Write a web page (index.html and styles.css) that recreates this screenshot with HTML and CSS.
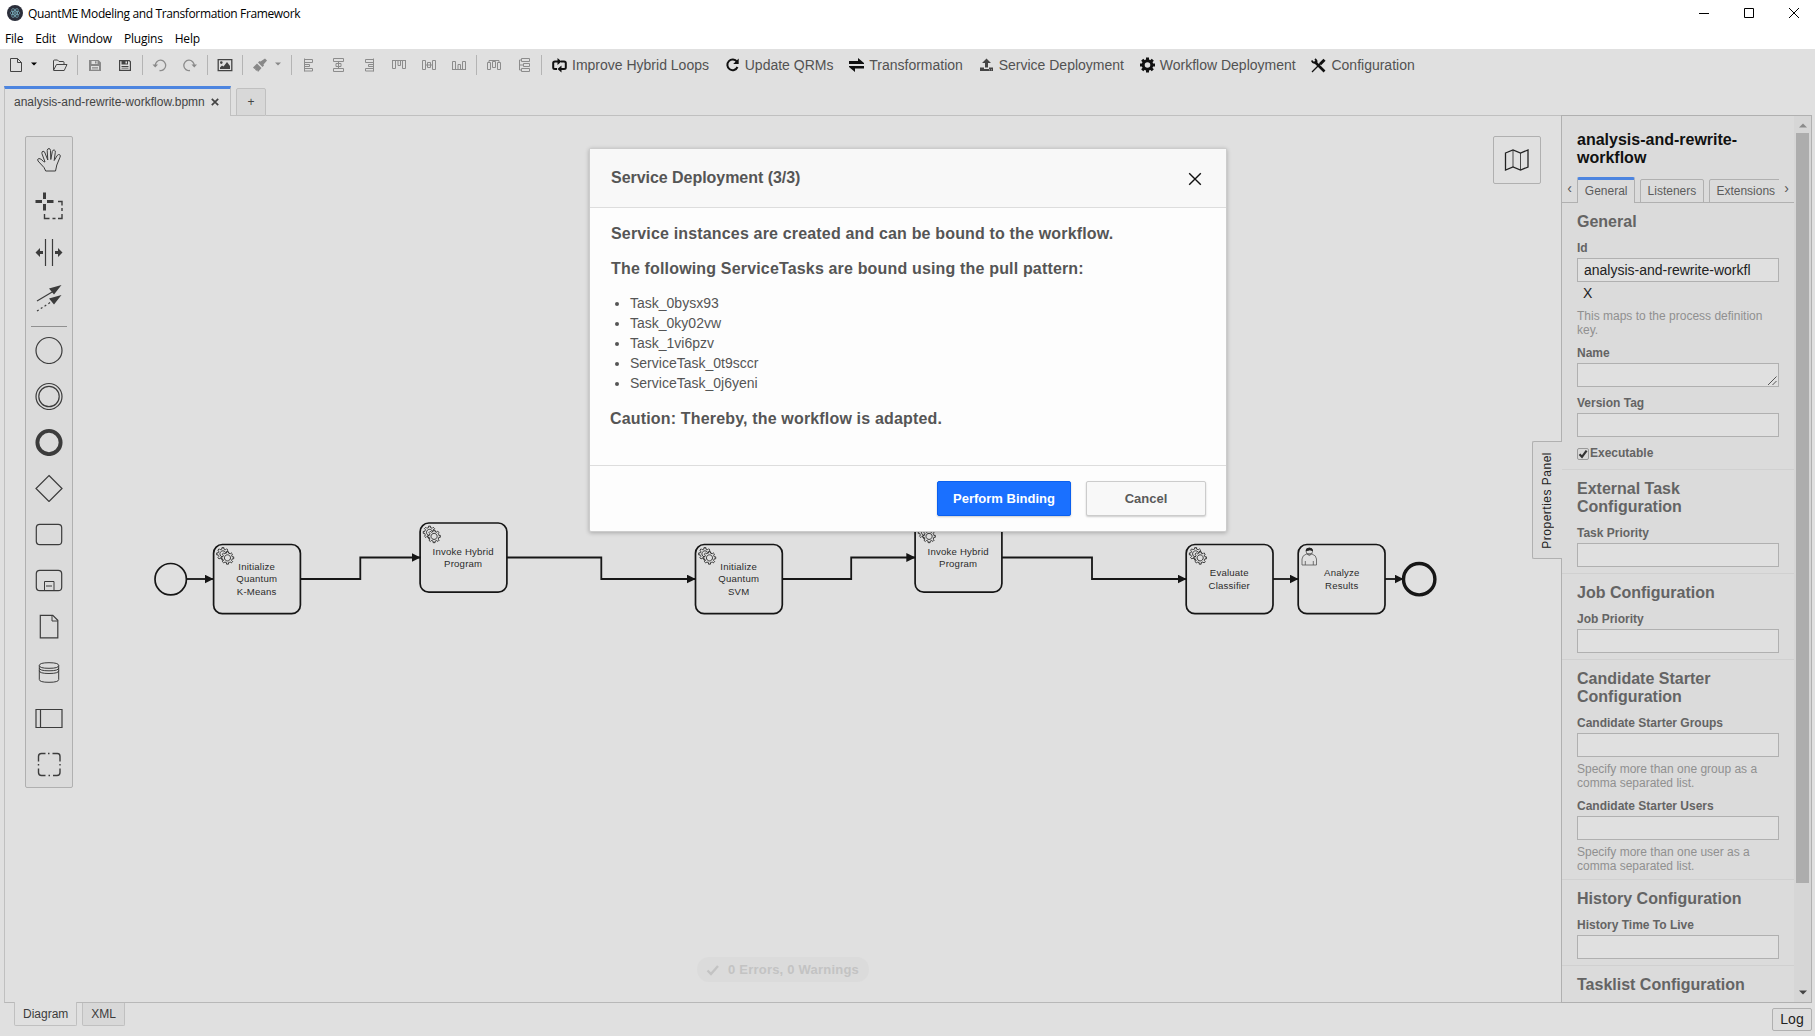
FILE: index.html
```html
<!DOCTYPE html>
<html lang="en">
<head>
<meta charset="utf-8">
<title>QuantME Modeling and Transformation Framework</title>
<link rel="stylesheet" href="styles.css">
</head>
<body>
<div class="window">
  <header class="titlebar">
    <svg class="app-icon" width="16" height="16" viewBox="0 0 16 16"><circle cx="8" cy="8" r="8" fill="#2b2e3a"/><g fill="none" stroke="#9feaf9" stroke-width=".6" opacity=".8"><ellipse cx="8" cy="8" rx="5" ry="2"/><ellipse cx="8" cy="8" rx="5" ry="2" transform="rotate(60 8 8)"/><ellipse cx="8" cy="8" rx="5" ry="2" transform="rotate(120 8 8)"/></g><circle cx="8" cy="8" r=".8" fill="#9feaf9"/></svg>
    <span class="app-title">QuantME Modeling and Transformation Framework</span>
    <div class="window-controls">
      <svg width="12" height="12" viewBox="0 0 12 12"><path d="M1 6.500h10"/></svg>
      <svg width="12" height="12" viewBox="0 0 12 12"><path d="M1.500 1.500h9v9h-9z"/></svg>
      <svg width="12" height="12" viewBox="0 0 12 12"><path d="M1 1l10 10M11 1L1 11"/></svg>
    </div>
  </header>
  <nav class="menubar"><span>File</span><span>Edit</span><span>Window</span><span>Plugins</span><span>Help</span></nav>

  <div class="toolbar">
    <span class="tool"><svg width="16" height="16" viewBox="0 0 16 16"><path class="ln" d="M2.500 1.500h7l4 4v9h-11zM9.500 1.500v4h4"/></svg></span>
    <span class="caret"><svg width="6" height="4" viewBox="0 0 6 4"><path d="M0 .5h6L3 3.500z"/></svg></span>
    <span class="tool"><svg width="16" height="16" viewBox="0 0 16 16"><path class="ln" d="M1.500 13V4q0-1 1-1h3l1.500 1.500h4q1 0 1 1V7M1.500 13.300L4.500 7.500h10.500L12.200 13.500H1.500"/></svg></span>
    <i class="sep"></i>
    <span class="tool off"><svg width="16" height="16" viewBox="0 0 16 16"><path fill-rule="evenodd" d="M2 3h9.500L14 5.500V14H2zM4.500 4v3h6V4zM4 9v3.800h8V9z"/><path d="M8 4.300h1.500v2.200H8zM5 10h6v.8H5zM5 11.600h6v.7H5z"/></svg></span>
    <span class="tool"><svg width="16" height="16" viewBox="0 0 16 16"><path fill-rule="evenodd" d="M2 3h10.500L14 4.500V14H2zM3.200 4.200v8.600h9.600V5l-.8-.8z"/><path fill-rule="evenodd" d="M4.500 3.500h6.500v4H4.500zM8.500 4.300v2.200h1.500V4.300zM4.500 9h7v.9h-7zM4.500 10.700h7v.9h-7z"/></svg></span>
    <i class="sep"></i>
    <span class="tool off"><svg width="16" height="16" viewBox="0 0 16 16"><path class="ln w" d="M3.300 8.500a5.200 5.200 0 1 1 4.200 5"/><path d="M.5 7.500h5.500L3.200 10.500z"/></svg></span>
    <span class="tool off"><svg width="16" height="16" viewBox="0 0 16 16"><path class="ln w" d="M12.200 8.500a5.200 5.200 0 1 0-4.200 5"/><path d="M15 7.500H9.500l2.800 3z"/></svg></span>
    <i class="sep"></i>
    <span class="tool"><svg width="16" height="16" viewBox="0 0 16 16"><path class="ln w" d="M1.200 2.700h13.600v11H1.200z"/><circle cx="4.300" cy="5.600" r="1.300"/><path d="M3 12V10.500l2-2 1.500 1 3.500-4.500L13 9v3z"/></svg></span>
    <i class="sep"></i>
    <span class="tool off"><svg width="16" height="16" viewBox="0 0 16 16"><path d="M13 1.500l2 2-3.500 4 .5 1-1.500 1.500L6 5.500 7.500 4l1 .5zM5 6.500l4.500 4.500-3.500 4L5 13l-.5 1-1.500-1.500.5-1-1 .5L1 10.500z"/></svg></span>
    <span class="caret off"><svg width="6" height="4" viewBox="0 0 6 4"><path d="M0 .5h6L3 3.500z"/></svg></span>
    <i class="sep"></i>
    <span class="tool off"><svg width="16" height="16" viewBox="0 0 16 16"><path class="ln" d="M3.500 1.500v13M3.500 2.500h8v3h-8M3.500 7.500h5v2h-5M3.500 11.500h8v2.500h-8"/></svg></span>
    <span class="tool off"><svg width="16" height="16" viewBox="0 0 16 16"><path class="ln" d="M2.500 1.500h10v3h-10zM5 6.500h5v3H5zM2.500 11.500h10v3h-10zM7.500 4.500v7"/></svg></span>
    <span class="tool off"><svg width="16" height="16" viewBox="0 0 16 16"><path class="ln" d="M12.500 1.500v13M12.500 2.500h-8v3h8M12.500 7.500h-5v2h5M12.500 11.500h-8v2.500h8"/></svg></span>
    <span class="tool off"><svg width="16" height="16" viewBox="0 0 16 16"><path class="ln" d="M1 3.500h14M1.500 3.500v8h3v-8M7 3.500v5h2.500v-5M11.500 3.500v8h3v-8"/></svg></span>
    <span class="tool off"><svg width="16" height="16" viewBox="0 0 16 16"><path class="ln" d="M1.500 3.500h3v9h-3zM6.500 5.500h3v5h-3zM11.500 3.500h3v9h-3zM4.500 8h7"/></svg></span>
    <span class="tool off"><svg width="16" height="16" viewBox="0 0 16 16"><path class="ln" d="M1 12.500h14M1.500 12.500v-8h3v8M7 12.500v-5h2.500v5M11.500 12.500v-8h3v8"/></svg></span>
    <i class="sep"></i>
    <span class="tool off"><svg width="16" height="16" viewBox="0 0 16 16"><path class="ln" d="M1.500 12.500v-7h3v7zM6.500 4.500h3v6h-3zM11.500 12.500v-7h3v7zM3 5.500v-2h10v2"/></svg></span>
    <span class="tool off"><svg width="16" height="16" viewBox="0 0 16 16"><path class="ln" d="M5.500 1.500h8v3h-8zM7.500 6.500h6v3h-6zM5.500 11.500h8v3h-8zM5.500 3h-2v10h2M3.500 8h4"/></svg></span>
    <i class="sep"></i>
    <span class="action"><svg width="15" height="16" viewBox="0 0 15 16"><path class="bk" d="M5 12H3Q1.200 12 1.200 10.500V6Q1.200 4.500 3 4.500h3M9 4.500h3Q13.800 4.500 13.800 6v4.500Q13.800 12 12 12H8"/><path fill="#111" d="M5.500 1l4 3.500-4 3.500zM9.500 8.500l-4 3.500 4 3.500z"/></svg>Improve Hybrid Loops</span>
    <span class="action"><svg width="15" height="16" viewBox="0 0 15 16"><path class="bk" d="M12 4.800A5.300 5.300 0 1 0 12.500 10"/><path fill="#111" d="M13.700 1.500V7H8.200z"/></svg>Update QRMs</span>
    <span class="action"><svg width="15" height="16" viewBox="0 0 15 16"><path fill="#111" d="M0 4h9V1l6 5v1H0zM15 11.500H6V15L0 10V9h15z"/></svg>Transformation</span>
    <span class="action"><svg width="15" height="16" viewBox="0 0 15 16"><path fill="#444" fill-rule="evenodd" d="M7.500 1.500l4.500 4.500H9V10.500H6V6H3zM1 10.500h4V12h5v-1.500h4V14H1zM10 12.500v.8h.9v-.8zM12 12.500v.8h.9v-.8z"/></svg>Service Deployment</span>
    <span class="action"><svg width="15" height="16" viewBox="0 0 15 16"><circle cx="7.500" cy="8" r="4.300" fill="none" stroke="#111" stroke-width="3"/><path stroke="#111" stroke-width="3" d="M7.500.5v3M7.500 12.500v3M0 8h3M12 8h3M2.200 2.700l2 2M10.800 11.300l2 2M12.800 2.700l-2 2M4.200 11.300l-2 2"/></svg>Workflow Deployment</span>
    <span class="action"><svg width="15" height="16" viewBox="0 0 15 16"><path fill="none" stroke="#111" stroke-width="2.600" d="M3.500 4.500L13.500 14.500"/><path fill="none" stroke="#111" stroke-width="1.300" d="M1 15l8-8"/><path fill="none" stroke="#111" stroke-width="3" d="M9 7.200l4.500-4.500"/><path fill="none" stroke="#111" stroke-width="1.800" d="M.8 3.500Q2 6.500 4.500 5.500T4 2"/></svg>Configuration</span>
  </div>

  <div class="tabs">
    <div class="tab active">analysis-and-rewrite-workflow.bpmn<svg width="8" height="8" viewBox="0 0 8 8"><path d="M.8.8l6.400 6.400M7.200.8L.8 7.200" stroke="#444" stroke-width="1.700"/></svg></div>
    <div class="tab add">+</div>
    <div class="tab-rest"></div>
  </div>

  <main class="workspace">
    <section class="canvas">
      <svg class="diagram" width="1556" height="886" viewBox="5 116 1556 886">
        <defs>
          <marker id="arrow" viewBox="0 0 10 10" refX="10" refY="5" markerWidth="9" markerHeight="9" markerUnits="userSpaceOnUse"><path d="M0 0L10 5L0 10z" fill="#161616"/></marker>
          <path id="cog" d="m 12,18 v -1.71335 c 0.352326,-0.0705 0.703932,-0.17838 1.047628,-0.32133 0.344416,-0.14465 0.665822,-0.32133 0.966377,-0.52145 l 1.19431,1.18005 1.567487,-1.57688 -1.195028,-1.18014 c 0.403376,-0.61394 0.683079,-1.29908 0.825447,-2.01824 l 1.622133,-0.01 v -2.2196 l -1.636514,0.01 c -0.07333,-0.35153 -0.178319,-0.70024 -0.323564,-1.04372 -0.145244,-0.34406 -0.321407,-0.6644 -0.522735,-0.96217 l 1.131035,-1.13631 -1.583305,-1.56293 -1.129598,1.13589 c -0.614052,-0.40108 -1.302883,-0.68093 -2.022633,-0.82247 l 0.0093,-1.61852 h -2.241173 l 0.0042,1.63124 c -0.353763,0.0736 -0.705369,0.17977 -1.049785,0.32371 -0.344415,0.14437 -0.665102,0.32092 -0.9635006,0.52006 l -1.1698628,-1.15823 -1.5667691,1.5792 1.1684265,1.15669 c -0.4026573,0.61283 -0.68308,1.29797 -0.8247287,2.01713 l -1.6588041,0.003 v 2.22174 l 1.6724648,-0.006 c 0.073327,0.35077 0.1797598,0.70243 0.3242851,1.04472 0.1452428,0.34448 0.3214064,0.6644 0.5227339,0.96066 l -1.1993431,1.19723 1.5840256,1.56011 1.1964668,-1.19348 c 0.6140517,0.40346 1.3028827,0.68232 2.0233517,0.82331 l 7.19e-4,1.69892 z m 0.221462,-3.9957 c -1.788948,0.7502 -3.8576,-0.0928 -4.6097055,-1.87438 -0.7521065,-1.78321 0.090598,-3.84627 1.8802645,-4.59604 1.78823,-0.74936 3.856881,0.0929 4.608987,1.87437 0.752106,1.78165 -0.0906,3.84612 -1.879546,4.59605 z"/>
          <g id="service" fill="#e0e0e0" stroke="#222" stroke-width="1"><use href="#cog"/><circle cx="16.300" cy="14.700" r="5" stroke="none"/><use href="#cog" x="5.200" y="4.600"/></g>
          <rect id="task" width="86.800" height="69.200" rx="8.700"/>
        </defs>
        <g class="flow">
          <path d="M187 579H213.500"/><path d="M300.500 579H360.300V557.500H420.500"/><path d="M507 557.500H601.300V579H695.700"/><path d="M782.500 579H851.200V557.500H915.300"/><path d="M1002 557.500H1092V579H1186.500"/><path d="M1273 579H1298.500"/><path d="M1385 579H1403.500"/>
        </g>
        <g class="shape">
          <circle cx="170.700" cy="579.200" r="15.700"/>
          <use href="#task" x="213.600" y="544.500"/><use href="#task" x="420.100" y="523"/><use href="#task" x="695.500" y="544.500"/><use href="#task" x="915.100" y="523"/><use href="#task" x="1186.200" y="544.500"/><use href="#task" x="1298.200" y="544.500"/>
          <circle class="end" cx="1419.200" cy="579.200" r="15.700"/>
        </g>
        <use href="#service" transform="translate(213.500 544.500) scale(.87)"/>
        <use href="#service" transform="translate(420.100 523) scale(.87)"/>
        <use href="#service" transform="translate(695.500 544.500) scale(.87)"/>
        <use href="#service" transform="translate(915.100 523) scale(.87)"/>
        <use href="#service" transform="translate(1186.200 544.500) scale(.87)"/>
        <g fill="none" stroke="#555" stroke-width=".8"><path d="M1302 565v-6q0-3.500 5-5.300h4.500q5 1.800 5 5.300v6zM1305.300 565v-4M1313.300 565v-4M1307 554q2.300 3 4.700 0"/><circle cx="1309.300" cy="551.500" r="3.200"/><path fill="#222" stroke="#222" d="M1306 551q-.3-3 3.300-3t3.300 3q-1.500-1.300-3-1t-3.600 1z"/></g>
        <g class="label">
          <text x="256.700" y="570">Initialize</text><text x="256.700" y="582.300">Quantum</text><text x="256.700" y="595">K-Means</text>
          <text x="463.200" y="555">Invoke Hybrid</text><text x="463.200" y="567">Program</text>
          <text x="738.700" y="570">Initialize</text><text x="738.700" y="582.300">Quantum</text><text x="738.700" y="595">SVM</text>
          <text x="958.200" y="555">Invoke Hybrid</text><text x="958.200" y="567">Program</text>
          <text x="1229.300" y="576">Evaluate</text><text x="1229.300" y="589">Classifier</text>
          <text x="1341.800" y="576">Analyze</text><text x="1341.800" y="589">Results</text>
        </g>
      </svg>

      <div class="palette">
        <span class="entry"><svg width="28" height="28" viewBox="0 0 28 28"><path transform="translate(2 2)" stroke-width="1" d="M8.700 23L7 19.500 1 13Q-.2 11 2 10.500 4 10.500 6.500 13.500L8 14 4.900 5.500Q4.700 3.400 6 3.200 7.500 3.200 8 5L10.800 12 10.200 2.500Q10.500.5 12 .5 13.400.7 13.500 2.500L13.800 11.500 15.300 3.500Q15.800 1.700 17.300 2 18.600 2.500 18.300 4.300L17.200 12.500 20.200 7.500Q21.500 6 22.800 6.800 23.800 7.600 23 9.200L19.800 17 18.500 23z"/></svg></span>
        <span class="entry"><svg width="28" height="28" viewBox="0 0 28 28"><path stroke-width="3" d="M.5 9.500h6.500M12 9.500h6.500M9.500.5V7M9.500 12v6.500"/><path stroke-width="1.400" d="M23 9.500h4v4M27 16v3M27 22v4.500h-4M20.500 26.500h-3M14.500 26.500h-5V22"/></svg></span>
        <span class="entry"><svg width="28" height="28" viewBox="0 0 28 28"><path stroke-width="1.200" d="M10.500 1v27M17.500 1v27"/><path class="solid" d="M.5 14.500L5 10v3h3v3H5v3zM27.500 14.500L23 10v3h-3v3h3v3z"/></svg></span>
        <span class="entry"><svg width="28" height="28" viewBox="0 0 28 28"><path d="M2 17L18 7.500"/><path stroke-dasharray="2 2.500" d="M2 27l14-9"/><path class="solid" d="M14 4.500L26.500 1l-7.500 9.500zM14 14.500L26.500 11l-7.500 9.500z"/></svg></span>
        <i class="palette-sep"></i>
        <span class="entry"><svg width="28" height="28" viewBox="0 0 28 28"><circle cx="14" cy="14.500" r="13"/></svg></span>
        <span class="entry"><svg width="28" height="28" viewBox="0 0 28 28"><circle cx="14" cy="14.500" r="13"/><circle cx="14" cy="14.500" r="10.200"/></svg></span>
        <span class="entry"><svg width="28" height="28" viewBox="0 0 28 28"><circle cx="14" cy="14.500" r="11.600" stroke-width="3.900"/></svg></span>
        <span class="entry"><svg width="28" height="28" viewBox="0 0 28 28"><path d="M14 1.500l13 13-13 13-13-13z"/></svg></span>
        <span class="entry"><svg width="28" height="28" viewBox="0 0 28 28"><rect x="1.300" y="4.300" width="25.400" height="20.400" rx="3.500"/></svg></span>
        <span class="entry"><svg width="28" height="28" viewBox="0 0 28 28"><rect x="1.300" y="4.300" width="25.400" height="20.400" rx="3.500"/><path stroke-width="1" d="M9.500 24.500v-9h9.500v9M11 20h6"/></svg></span>
        <span class="entry"><svg width="28" height="28" viewBox="0 0 28 28"><path d="M5.300 3.300h12.500l5 5v17.500H5.300z"/><path stroke-width="1" d="M17 3.500v5.500h5.500"/></svg></span>
        <span class="entry"><svg width="28" height="28" viewBox="0 0 28 28"><path stroke-width="1" d="M4.300 7.500q0-2.800 9.700-2.800t9.700 2.800-9.700 2.800-9.700-2.800v14q0 2.800 9.700 2.800t9.700-2.800v-14M4.300 10q0 2.800 9.700 2.800t9.700-2.800M4.300 12.700q0 2.800 9.700 2.800t9.700-2.800"/></svg></span>
        <span class="entry"><svg width="28" height="28" viewBox="0 0 28 28"><path d="M1 5.500h26v18H1zM5.500 5.500v18"/></svg></span>
        <span class="entry"><svg width="28" height="28" viewBox="0 0 28 28"><path stroke-width="1.400" d="M3.500 11.500V6.500q0-3 3-3h4M13 3.500h1.500M17.500 3.500h5q2.500 0 2.500 3v5M25 14v1.500M25 18.500v4q0 3-3 3h-4M15 25.500h-1.500M10.500 25.500h-4q-3 0-3-3v-4M3.500 15.500V14"/></svg></span>
      </div>

      <div class="minimap"><svg width="26" height="24" viewBox="0 0 26 24"><path stroke-width="1.300" d="M1.500 5L9 2l7.500 3L24 2v17l-7.500 3L9 19l-7.500 3z"/><path stroke-width=".8" d="M9 2v17M16.500 5v17"/></svg></div>
      <div class="lint"><svg width="14" height="12" viewBox="0 0 14 12"><path d="M1.500 6.500l3.500 3.500L12 2" fill="none" stroke="#c3c3c3" stroke-width="2.400"/></svg>0 Errors, 0 Warnings</div>
      <div class="panel-toggle"><span>Properties Panel</span></div>

      <div class="dialog">
        <div class="dialog-head"><h2>Service Deployment (3/3)</h2><svg width="14" height="14" viewBox="0 0 14 14"><path d="M1.200 1.200l11.600 11.600M12.800 1.200L1.200 12.800" stroke="#111" stroke-width="1.400"/></svg></div>
        <div class="dialog-body">
          <h3>Service instances are created and can be bound to the workflow.</h3>
          <h3>The following ServiceTasks are bound using the pull pattern:</h3>
          <ul><li>Task_0bysx93</li><li>Task_0ky02vw</li><li>Task_1vi6pzv</li><li>ServiceTask_0t9sccr</li><li>ServiceTask_0j6yeni</li></ul>
          <h3 class="caution">Caution: Thereby, the workflow is adapted.</h3>
        </div>
        <div class="dialog-foot"><button class="btn primary">Perform Binding</button><button class="btn">Cancel</button></div>
      </div>
    </section>

    <aside class="panel">
      <div class="panel-content">
        <h1>analysis-and-rewrite-workflow</h1>
        <div class="ptabs">
          <span class="nav">‹</span>
          <div class="ptab-list"><span class="ptab on">General</span><span class="ptab">Listeners</span><span class="ptab">Extensions</span></div>
          <span class="nav">›</span>
        </div>
        <section class="group first">
          <h4>General</h4>
          <label>Id</label><div class="field">analysis-and-rewrite-workfl</div><div class="clear">X</div>
          <p>This maps to the process definition key.</p>
          <label>Name</label><div class="field area"><svg width="9" height="9" viewBox="0 0 9 9"><path d="M0 9l8.500-8.500M4.500 9L8.500 5" stroke="#555" fill="none"/></svg></div>
          <label>Version Tag</label><div class="field"></div>
          <label class="check"><svg width="12" height="12" viewBox="0 0 12 12"><rect x=".5" y=".5" width="11" height="11" rx="1.500" fill="#d8d8d8" stroke="#999"/><path d="M2.500 6.300l2.500 2.500L9.600 2.700" fill="none" stroke="#333" stroke-width="2.200"/></svg>Executable</label>
        </section>
        <section class="group"><h4>External Task Configuration</h4><label>Task Priority</label><div class="field"></div></section>
        <section class="group"><h4>Job Configuration</h4><label>Job Priority</label><div class="field"></div></section>
        <section class="group"><h4>Candidate Starter Configuration</h4>
          <label>Candidate Starter Groups</label><div class="field"></div><p>Specify more than one group as a comma separated list.</p>
          <label>Candidate Starter Users</label><div class="field"></div><p>Specify more than one user as a comma separated list.</p></section>
        <section class="group"><h4>History Configuration</h4><label>History Time To Live</label><div class="field"></div></section>
        <section class="group"><h4>Tasklist Configuration</h4></section>
      </div>
      <div class="scrollbar"><svg width="8" height="5" viewBox="0 0 8 5"><path d="M0 4.500L4 .5l4 4z" fill="#8b8b8b"/></svg><div class="thumb"></div><svg width="8" height="5" viewBox="0 0 8 5"><path d="M0 .5h8l-4 4z" fill="#444"/></svg></div>
    </aside>
  </main>

  <footer class="bottom"><span class="view on">Diagram</span><span class="view">XML</span><span class="log">Log</span></footer>
</div>
</body>
</html>
```
FILE: styles.css
```css
* { box-sizing: border-box; }
body { margin: 0; font-family: "Liberation Sans", Arial, sans-serif; color: #444; background: #e0e0e0; overflow: hidden; }
h1, h2, h3, h4, p, ul { margin: 0; padding: 0; }
svg { display: block; flex: none; }
.window { width: 1815px; height: 1036px; display: flex; flex-direction: column; white-space: nowrap; }

.titlebar { height: 28px; padding: 0 15px 1px 7px; background: #fff; display: flex; align-items: center; font: 12px "Open Sans", sans-serif; color: #000; letter-spacing: -.37px; }
.app-icon { margin: 0 5px 1px 0; }
.window-controls { margin: 0 0 1px auto; display: flex; gap: 33px; }
.window-controls path { fill: none; stroke: #000; stroke-width: 1; }
.menubar { height: 21px; background: #fff; padding: 0 5px; display: flex; gap: 12px; align-items: center; font: 12px "Open Sans", sans-serif; letter-spacing: -.2px; color: #000; }

.toolbar { height: 37px; padding: 0 0 5px 1px; display: flex; align-items: center; font-size: 14px; color: #525252; }
.tool { width: 30px; display: flex; justify-content: center; fill: #444; stroke: none; }
.tool .ln { fill: none; stroke: #444; stroke-width: 1; }
.tool .ln.w { stroke-width: 1.3; }
.off { fill: #888; }
.tool.off .ln { stroke: #8c8c8c; }
.caret { width: 14px; padding-bottom: 2px; }
.sep { width: 1px; height: 20px; margin: 0 2px; background: #b4b4b4; flex: none; }
.action { display: flex; align-items: center; gap: 5px; padding: 0 7.8px 0 8px; }
.bk { fill: none; stroke: #111; stroke-width: 2; }

.tabs { height: 30px; display: flex; align-items: flex-end; padding: 0 4px; font-size: 12px; }
.tab.active { width: 227px; height: 30px; border: 1px solid #c0c0c0; border-top: 3px solid #4d85e0; border-bottom: 0; padding: 0 0 2px 9px; display: flex; align-items: center; gap: 6px; }
.tab.add { position: relative; width: 30px; height: 28px; margin-left: 5px; border: 1px solid #c0c0c0; border-radius: 2px 2px 0 0; background: #d8d8d8; display: flex; align-items: center; justify-content: center; }
.tab.add::before { content: ""; position: absolute; left: -6px; bottom: -1px; width: 6px; height: 1px; background: #c0c0c0; }
.tab-rest { flex: 1; border-bottom: 1px solid #c0c0c0; height: 1px; }

.workspace { height: 887px; margin: 0 3px 0 4px; border-left: 1px solid #c0c0c0; border-bottom: 1px solid #b8b8b8; display: flex; }
.canvas { position: relative; width: 1556px; height: 886px; flex: none; }
.diagram { position: absolute; left: 0; top: 0; }
.flow path { fill: none; stroke: #161616; stroke-width: 1.8; marker-end: url(#arrow); }
.shape { fill: none; stroke: #161616; stroke-width: 1.7; }
.shape .end { stroke-width: 3.4; }
.label { font-size: 9.6px; letter-spacing: .2px; text-anchor: middle; fill: #2c2c2c; }

.palette { position: absolute; left: 20px; top: 20px; width: 48px; height: 652px; border: 1px solid #b0b0b0; border-radius: 2px; background: #dbdbdb; display: flex; flex-direction: column; }
.entry { height: 46px; display: flex; align-items: center; justify-content: center; }
.entry path, .entry circle, .entry rect { fill: none; stroke: #3c3c3c; }
.entry svg { stroke-width: 1.2; }
.entry .solid { fill: #3c3c3c; stroke: none; }
.palette-sep { height: 1px; margin: 5px 5px 0; background: #909090; }
.minimap { position: absolute; left: 1488px; top: 20px; width: 48px; height: 48px; border: 1px solid #b0b0b0; border-radius: 2px; display: flex; align-items: center; justify-content: center; }
.minimap path { fill: none; stroke: #222; }
.lint { position: absolute; left: 692px; top: 841px; width: 172px; height: 25px; border-radius: 12px; background: #dbdbdb; display: flex; align-items: center; gap: 8px; padding-left: 9px; font-size: 13px; font-weight: bold; letter-spacing: .22px; color: #c3c3c3; }
.panel-toggle { position: absolute; left: 1527px; top: 325px; width: 30px; height: 118px; border: 1px solid #b0b0b0; border-right: 0; border-radius: 2px 0 0 2px; background: #dbdbdb; display: flex; align-items: center; justify-content: center; z-index: 1; }
.panel-toggle span { writing-mode: vertical-rl; transform: rotate(180deg); margin-right: 2px; font-size: 12px; letter-spacing: .5px; color: #222; }

.dialog { position: absolute; left: 584px; top: 32px; width: 638px; height: 384px; border: 1px solid #ccc; border-radius: 2px; background: #fdfdfd; box-shadow: 0 1px 4px rgba(0,0,0,.25); display: flex; flex-direction: column; color: #555; }
.dialog-head { height: 59px; padding: 2px 24px 0 21px; background: #f8f8f8; border-bottom: 1px solid #ddd; display: flex; align-items: center; justify-content: space-between; }
.dialog h2, .dialog h3 { font-size: 16px; line-height: 20px; }
.dialog-head h2 { padding-bottom: 3px; letter-spacing: -.04px; }
.dialog-body { height: 258px; padding: 16px 21px 0; border-bottom: 1px solid #ddd; display: flex; flex-direction: column; gap: 15px; }
.dialog-body h3 { letter-spacing: .165px; }
.dialog-body .caution { margin-left: -1px; padding-top: 1px; }
.dialog-body ul { margin-top: -1px; padding-left: 19px; font-size: 14px; line-height: 20px; }
.dialog-foot { flex: 1; display: flex; justify-content: flex-end; padding: 15px 20px 0; gap: 15px; }
.btn { width: 120px; height: 35px; border: 1px solid #ccc; border-radius: 2px; background: #f8f8f8; box-shadow: 0 1px 2px rgba(0,0,0,.2); font: bold 13px "Liberation Sans", Arial, sans-serif; color: #5a5a5a; padding: 0; }
.btn.primary { width: 134px; background: #1a70ff; border-color: #0b60ef; color: #fff; }

.panel { width: 251px; height: 888px; margin-top: -1px; border: 1px solid #b0b0b0; background: #dbdbdb; display: flex; position: relative; flex: none; overflow: hidden; }
.panel-content { width: 232px; overflow: hidden; }
.panel h1 { font-size: 16px; line-height: 18px; color: #111; white-space: normal; padding: 15px 30px 0 15px; }
.ptabs { display: flex; margin-top: 10px; height: 26px; border-bottom: 1px solid #b0b0b0; font-size: 12px; }
.nav { width: 15px; text-align: center; font-size: 14px; line-height: 22px; color: #555; }
.ptab-list { width: 202px; height: 26px; display: flex; gap: 4.5px; align-items: flex-end; overflow: hidden; }
.ptab { height: 24px; margin-bottom: 0; padding: 0 6.8px; border: 1px solid #b0b0b0; border-radius: 2px 2px 0 0; line-height: 23px; color: #5c5c5c; }
.ptab.on { height: 26px; border-bottom: 0; border-top: 3px solid #4d85e0; background: #dbdbdb; }
.group { padding: 10px 15px 6px; border-bottom: 1px solid #d0d0d0; white-space: normal; }
.group.first { padding-bottom: 9px; }
.group h4 { font-size: 16px; line-height: 18px; color: #646464; margin-bottom: 10px; }
.group label { display: block; font-size: 12px; font-weight: bold; line-height: 14px; margin: 9px 0 3px; color: #646464; }
.group h4 + label { margin-top: 0; }
.field { width: 202px; height: 24px; border: 1px solid #b0b0b0; background: #e0e0e0; padding-left: 6px; font-size: 14px; line-height: 22px; color: #222; overflow: hidden; }
.area { display: flex; align-items: flex-end; justify-content: flex-end; padding: 0 1px 1px 0; }
.clear { height: 22px; padding: 3px 0 0 6px; font-size: 14px; line-height: 16px; color: #222; }
.group p { margin-top: 5px; padding-right: 10px; font-size: 12px; line-height: 14px; color: #909090; }
.group .check { display: flex; gap: 1px; margin-bottom: 0; }
.check svg { margin-top: 2px; }
.scrollbar { width: 17px; margin-left: auto; background: #d6d6d6; display: flex; flex-direction: column; align-items: center; padding: 7px 0 7px; }
.thumb { width: 13px; height: 750px; margin: 5px 0 auto; background: #adadad; }

.bottom { display: flex; align-items: flex-start; padding: 0 3px 0 14px; gap: 5px; font-size: 12px; color: #3c3c3c; }
.view { height: 23px; padding: 0 8px; border: 1px solid #c0c0c0; border-top: 0; border-radius: 0 0 2px 2px; background: #d8d8d8; line-height: 23px; }
.view.on { height: 24px; margin-top: -1px; padding-top: 1px; background: #e0e0e0; }
.log { margin: 5px 0 0 auto; width: 40px; height: 23px; border: 1px solid #b0b0b0; border-radius: 2px; background: #dedede; font-size: 14px; line-height: 21px; text-align: center; color: #222; }
```
